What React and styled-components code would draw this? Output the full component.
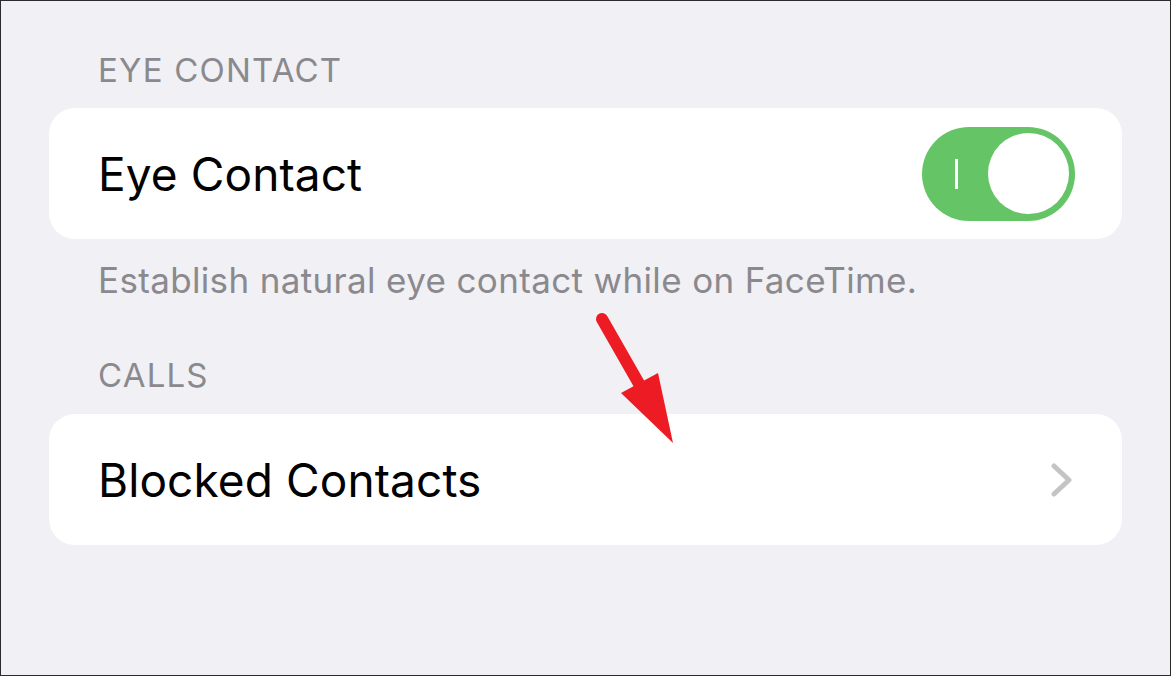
import React from 'react';
import styled, { createGlobalStyle } from 'styled-components';

const Global = createGlobalStyle`
  html, body { margin: 0; padding: 0; }
  body { font-family: Inter, "Noto Sans", sans-serif; }
`;

const Page = styled.div`
  position: relative;
  box-sizing: border-box;
  width: 1171px;
  height: 676px;
  border: 1px solid #2b2b2b;
  background: #f1f0f5;
  padding: 49px 48px 0 48px;
  display: flex;
  flex-direction: column;
  overflow: hidden;
`;

const SectionLabel = styled.div`
  font-size: 33px;
  line-height: 40px;
  color: #8a898e;
  padding-left: 49px;
  margin-top: ${p => p.$top || 0}px;
  letter-spacing: 1.2px;
`;

const Card = styled.div`
  height: 131px;
  margin-top: ${p => p.$top || 0}px;
  background: #ffffff;
  border-radius: 26px;
  display: flex;
  align-items: center;
  justify-content: space-between;
  padding: 0 ${p => p.$right || 47}px 0 49px;
`;

const RowTitle = styled.span`
  font-size: 46px;
  color: #000;
  letter-spacing: 0.1px;
`;

const Footer = styled.div`
  font-size: 35px;
  line-height: 42px;
  color: #8a898e;
  padding-left: 49px;
  margin-top: 20px;
  letter-spacing: 0.35px;
`;

const Toggle = styled.div`
  position: relative;
  width: 153px;
  height: 94px;
  border-radius: 47px;
  background: #65c466;
  display: flex;
  align-items: center;
  padding-left: 33px;
  box-sizing: border-box;
`;

const OnMark = styled.span`
  width: 3px;
  height: 30px;
  background: #fff;
`;

const Knob = styled.span`
  position: absolute;
  right: 6px;
  top: 6.5px;
  width: 81px;
  height: 81px;
  border-radius: 50%;
  background: #fff;
`;

const Arrow = styled.svg`
  position: absolute;
  left: 0;
  top: 0;
  pointer-events: none;
`;

export default function App() {
  return (
    <>
      <Global />
      <Page>
        <SectionLabel>EYE CONTACT</SectionLabel>
        <Card $top={18}>
          <RowTitle>Eye Contact</RowTitle>
          <Toggle>
            <OnMark />
            <Knob />
          </Toggle>
        </Card>
        <Footer>Establish natural eye contact while on FaceTime.</Footer>
        <SectionLabel $top={54}>CALLS</SectionLabel>
        <Card $top={19} $right={49}>
          <RowTitle>Blocked Contacts</RowTitle>
          <svg width="22" height="34" viewBox="0 0 22 34">
            <polyline points="3,3 18,17 3,31" fill="none" stroke="#c4c4c7" strokeWidth="5" strokeLinecap="round" strokeLinejoin="round" />
          </svg>
        </Card>
        <Arrow width="1171" height="676" viewBox="0 0 1171 676">
          <line x1="601" y1="318" x2="645" y2="395" stroke="#ed1c24" strokeWidth="12" strokeLinecap="round" />
          <polygon points="620,392 657,372 672,442" fill="#ed1c24" />
        </Arrow>
      </Page>
    </>
  );
}
